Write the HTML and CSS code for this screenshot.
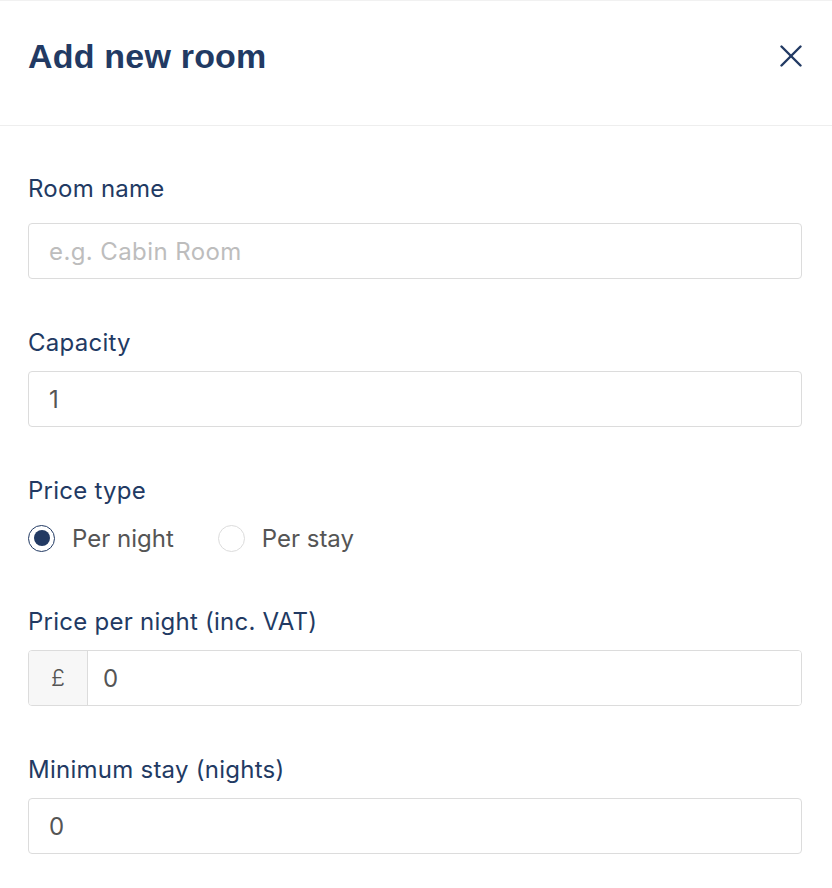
FILE: index.html
```html
<!DOCTYPE html>
<html lang="en">
<head>
<meta charset="utf-8">
<title>Add new room</title>
<link rel="stylesheet" href="styles.css">
</head>
<body>
<div class="modal">
  <header class="modal-header">
    <h1 class="modal-title">Add new room</h1>
    <button class="close-btn" aria-label="Close">
      <svg width="22" height="22" viewBox="0 0 22 22" fill="none" stroke="#223a63" stroke-width="2.4" stroke-linecap="round">
        <line x1="1.5" y1="1.5" x2="20.5" y2="20.5"/>
        <line x1="20.5" y1="1.5" x2="1.5" y2="20.5"/>
      </svg>
    </button>
  </header>
  <div class="modal-body">
    <div class="field field-first">
      <label class="label">Room name</label>
      <input class="input" type="text" placeholder="e.g. Cabin Room">
    </div>
    <div class="field">
      <label class="label">Capacity</label>
      <input class="input" type="text" value="1">
    </div>
    <div class="field">
      <label class="label">Price type</label>
      <div class="radio-row">
        <span class="radio-item"><span class="radio checked"></span><span class="radio-text">Per night</span></span>
        <span class="radio-item"><span class="radio"></span><span class="radio-text">Per stay</span></span>
      </div>
    </div>
    <div class="field">
      <label class="label">Price per night (inc. VAT)</label>
      <div class="input-group">
        <span class="addon">£</span>
        <input class="group-input" type="text" value="0">
      </div>
    </div>
    <div class="field">
      <label class="label">Minimum stay (nights)</label>
      <input class="input" type="text" value="0">
    </div>
  </div>
</div>
</body>
</html>
```
FILE: styles.css
```css
* { box-sizing: border-box; }
html, body { margin: 0; padding: 0; background: #fff; }
body { font-family: Inter, "Noto Sans", sans-serif; color: #223a63; }

.modal { width: 832px; border-top: 1px solid #f1f1f1; }

.modal-header {
  display: flex;
  justify-content: space-between;
  align-items: center;
  padding: 35px 30px 49px 28px;
  border-bottom: 1px solid #eeeeee;
}
.modal-title {
  margin: 0;
  font-family: "Liberation Sans", Arial, sans-serif;
  font-weight: 700;
  font-size: 34px;
  line-height: 40px;
  letter-spacing: 0.2px;
  color: #223a63;
}
.close-btn {
  display: flex;
  padding: 0;
  margin: 0;
  border: 0;
  background: none;
}

.modal-body { padding: 0 30px 0 28px; }

.field { display: flex; flex-direction: column; margin-top: 49px; }
.field-first { margin-top: 48px; }
.field-first .label { margin-bottom: 20px; }

.label {
  font-size: 24px;
  line-height: 29px;
  letter-spacing: 0.25px;
  color: #223a63;
  margin-bottom: 14px;
}

.input {
  height: 56px;
  width: 100%;
  border: 1px solid #dcdcdc;
  border-radius: 4px;
  padding: 0 20px;
  font-family: Inter, "Noto Sans", sans-serif;
  font-size: 24px;
  letter-spacing: 0.4px;
  color: #555555;
  background: #fff;
  outline: none;
}
.input::placeholder { color: #bdbdbd; }

.radio-row {
  display: flex;
  align-items: center;
  height: 34px;
  margin-top: 2px;
  margin-bottom: 3px;
  gap: 44px;
}
.radio-item { display: flex; align-items: center; gap: 17px; }
.radio {
  width: 27px;
  height: 27px;
  border-radius: 50%;
  border: 1px solid #dcdcdc;
  background: #fff;
  display: flex;
  align-items: center;
  justify-content: center;
}
.radio.checked { border: 1.5px solid #223a63; }
.radio.checked::after {
  content: "";
  width: 16px;
  height: 16px;
  border-radius: 50%;
  background: #223a63;
}
.radio-text { font-size: 24px; line-height: 29px; color: #555555; }

.input-group {
  display: flex;
  height: 56px;
  border: 1px solid #dcdcdc;
  border-radius: 4px;
  overflow: hidden;
}
.addon {
  width: 59px;
  display: flex;
  align-items: center;
  justify-content: center;
  background: #f7f7f7;
  border-right: 1px solid #dcdcdc;
  font-size: 23px;
  font-weight: 300;
  color: #555555;
}
.group-input {
  flex: 1;
  border: 0;
  padding: 0 15px;
  font-family: Inter, "Noto Sans", sans-serif;
  font-size: 24px;
  color: #555555;
  outline: none;
  background: #fff;
}
```
